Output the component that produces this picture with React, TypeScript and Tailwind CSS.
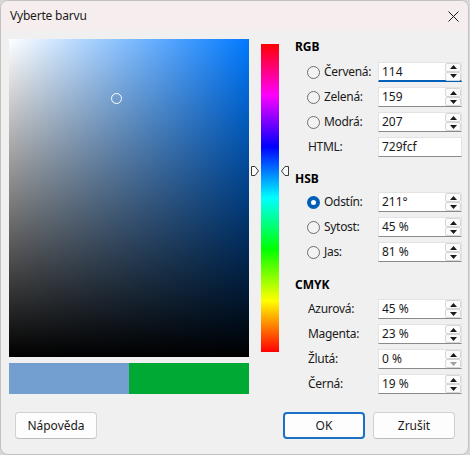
import React from 'react'

const FONT = "font-['Segoe_UI','Noto_Sans',sans-serif]"

type FieldProps = {
  value: string
  focused?: boolean
  spin?: boolean
  downDisabled?: boolean
}

const Arrow = ({ up, disabled }: { up?: boolean; disabled?: boolean }) => (
  <span className="w-[16px] h-[9px] border border-[#d6d6d6] bg-[#fbfbfb] rounded-[2px] flex items-center justify-center">
    <svg width="7" height="4" viewBox="0 0 7 4">
      <path
        d={up ? 'M3.5 0 L7 4 L0 4 Z' : 'M0 0 L7 0 L3.5 4 Z'}
        fill={disabled ? '#a0a0a0' : '#1a1a1a'}
      />
    </svg>
  </span>
)

const Field = ({ value, focused, spin = true, downDisabled }: FieldProps) => (
  <div
    className={`w-[84px] h-[20px] bg-white flex items-center border border-[#e3e3e3] ${
      focused ? 'border-b-2 border-b-[#005fb8]' : 'border-b-[#8a8a8a]'
    }`}
  >
    <span className="flex-1 pl-[3px] text-[12px] text-[#1a1a1a] leading-none">{value}</span>
    {spin && (
      <span className="flex flex-col">
        <Arrow up />
        <Arrow disabled={downDisabled} />
      </span>
    )}
  </div>
)

const Radio = ({ checked }: { checked?: boolean }) =>
  checked ? (
    <span className="w-[13px] h-[13px] rounded-full bg-[#005fb8] flex items-center justify-center">
      <span className="w-[5px] h-[5px] rounded-full bg-white" />
    </span>
  ) : (
    <span className="w-[13px] h-[13px] rounded-full border border-[#6e6e6e] bg-[#f3f3f3]" />
  )

type RowProps = FieldProps & { label: string; radio?: boolean; checked?: boolean }

const Row = ({ label, radio, checked, ...field }: RowProps) => (
  <div className="flex items-center h-[20px] pl-[12px]">
    <div className="w-[71px] flex items-center text-[12px] text-[#1a1a1a] tracking-[-0.3px]">
      {radio ? (
        <>
          <Radio checked={checked} />
          <span className="ml-[4px]">{label}</span>
        </>
      ) : (
        <span className="ml-px">{label}</span>
      )}
    </div>
    <Field {...field} />
  </div>
)

const Heading = ({ children, className }: { children: React.ReactNode; className: string }) => (
  <div className={`h-[16px] flex items-center text-[12px] font-bold text-black ${className}`}>{children}</div>
)

const Marker = ({ flip }: { flip?: boolean }) => (
  <svg width="8" height="10" viewBox="0 0 8 10" className={flip ? '-scale-x-100' : ''}>
    <path d="M0.5 0.5 H4 L7.5 5 L4 9.5 H0.5 Z" fill="#fafafa" stroke="#3a3a3a" />
  </svg>
)

export default function App() {
  return (
    <div className={`w-[470px] h-[455px] bg-[#d8d8d8] ${FONT}`}>
      <div className="w-[469px] h-[455px] rounded-[8px] border border-[#c2c2c2] bg-[#f0f0f0] overflow-hidden flex flex-col">
        {/* title bar */}
        <div className="h-[30px] bg-[#f6eeee] flex items-center justify-between pl-[9px] pr-[8px]">
          <span className="text-[12px] text-[#1a1a1a] tracking-[-0.2px]">Vyberte barvu</span>
          <svg width="11" height="11" viewBox="0 0 11 11" className="mr-[1px]">
            <path d="M0.5 0.5 L10.5 10.5 M10.5 0.5 L0.5 10.5" stroke="#1a1a1a" strokeWidth="1" />
          </svg>
        </div>

        <div className="flex pl-[8px] pt-[8px]">
          {/* saturation / brightness field and preview */}
          <div className="flex flex-col">
            <div className="relative w-[240px] h-[318px] bg-[#0079ff]">
              <div className="absolute inset-0 bg-gradient-to-r from-white to-white/0" />
              <div className="absolute inset-0 bg-gradient-to-b from-black/0 to-black" />
              <span className="absolute left-[102px] top-[54px] w-[11px] h-[11px] rounded-full border border-white" />
            </div>
            <div className="flex mt-[6px] h-[31px]">
              <div className="w-[120px] bg-[#729fcf]" />
              <div className="w-[120px] bg-[#00a933]" />
            </div>
          </div>

          {/* hue strip */}
          <div className="relative w-[46px]">
            <div className="ml-[12px] mt-[5px] w-[18px] h-[308px] bg-[linear-gradient(to_bottom,#ff0000,#ff00ff,#0000ff,#00ffff,#00ff00,#ffff00,#ff0000)]" />
            <div className="absolute left-[2px] top-[127px]">
              <Marker />
            </div>
            <div className="absolute left-[32px] top-[127px]">
              <Marker flip />
            </div>
          </div>

          {/* numeric values */}
          <div className="flex flex-col">
            <Heading className="">RGB</Heading>
            <div className="flex flex-col gap-[5px] mt-[7px]">
              <Row radio label="Červená:" value="114" focused />
              <Row radio label="Zelená:" value="159" />
              <Row radio label="Modrá:" value="207" />
              <Row label="HTML:" value="729fcf" spin={false} />
            </div>

            <Heading className="mt-[14px]">HSB</Heading>
            <div className="flex flex-col gap-[5px] mt-[5px]">
              <Row radio checked label="Odstín:" value="211°" />
              <Row radio label="Sytost:" value="45 %" />
              <Row radio label="Jas:" value="81 %" />
            </div>

            <Heading className="mt-[15px]">CMYK</Heading>
            <div className="flex flex-col gap-[5px] mt-[6px]">
              <Row label="Azurová:" value="45 %" />
              <Row label="Magenta:" value="23 %" />
              <Row label="Žlutá:" value="0 %" downDisabled />
              <Row label="Černá:" value="19 %" />
            </div>
          </div>
        </div>

        {/* dialog buttons */}
        <div className="flex items-center mt-[18px] pl-[14px] pr-[13px]">
          <button className="w-[82px] h-[27px] rounded-[4px] border border-[#d0d0d0] border-b-[#bdbdbd] bg-[#fdfdfd] text-[12px] text-[#1a1a1a]">
            Nápověda
          </button>
          <div className="flex-1" />
          <button className="w-[82px] h-[27px] rounded-[4px] border-2 border-[#1b6fc4] bg-[#fdfdfd] text-[12px] text-[#1a1a1a]">
            OK
          </button>
          <button className="ml-[8px] w-[82px] h-[27px] rounded-[4px] border border-[#d0d0d0] border-b-[#bdbdbd] bg-[#fdfdfd] text-[12px] text-[#1a1a1a]">
            Zrušit
          </button>
        </div>
      </div>
    </div>
  )
}
